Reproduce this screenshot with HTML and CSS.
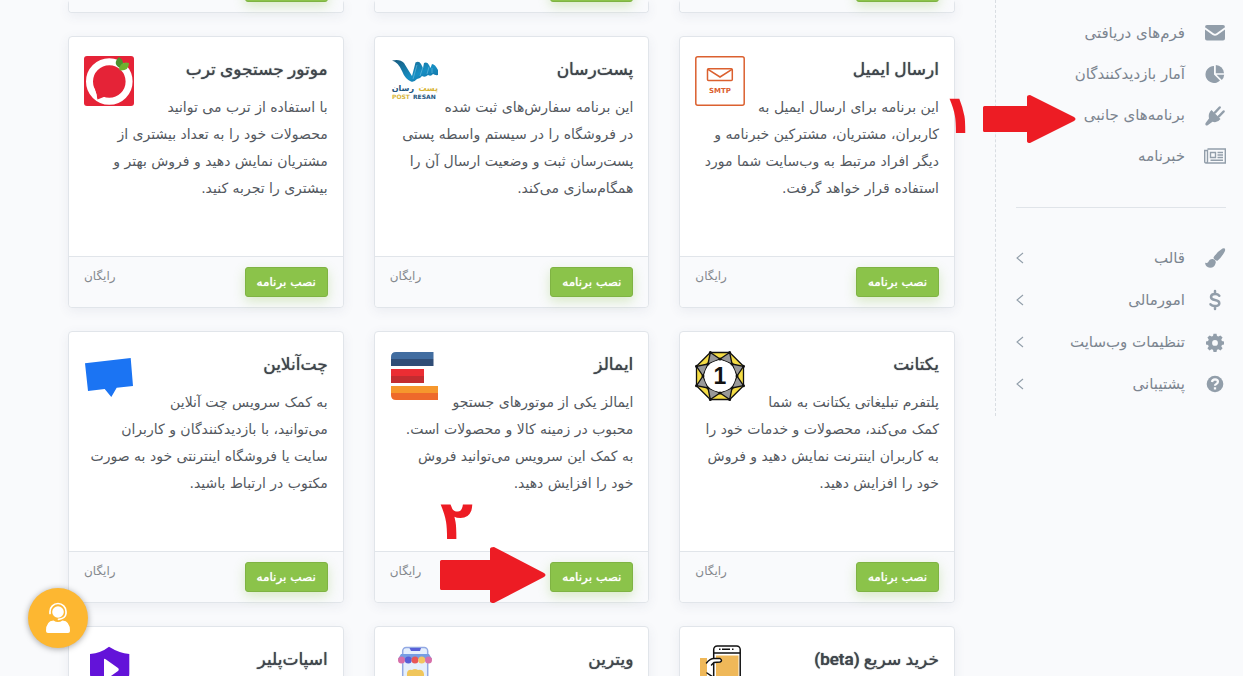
FILE: index.html
```html
<!DOCTYPE html>
<html lang="fa" dir="rtl">

<head>
    <meta charset="UTF-8">
    <meta name="viewport" content="width=device-width, initial-scale=1.0">
    <title>برنامه‌های جانبی</title>
    <link rel="stylesheet" href="styles.css">
</head>

<body>
    <div class="page">
        <aside class="sidebar">
            <nav>
                <ul class="menu">
                    <li><a href="#">
                        <svg class="menu-icon" viewBox="0 0 22 22"><path d="M1 5.200Q1 3 3 3H19Q21 3 21 5.200L12.500 11.200Q11 12.200 9.500 11.200L1 5.200Z"/><path d="M1 7.500L8.600 13Q11 14.600 13.400 13L21 7.500V16.500Q21 18.500 19 18.500H3Q1 18.500 1 16.500Z"/></svg>
                        <span>فرم‌های دریافتی</span>
                    </a></li>
                    <li><a href="#">
                        <svg class="menu-icon" viewBox="0 0 22 22"><path d="M10 11.500L16 17.500A8.500 8.500 0 1 1 10 3Z"/><path d="M11.800 2A8.300 8.300 0 0 1 20 10.200H11.800Z"/><path d="M12.600 11.800H20.200Q20 14.800 17.800 17Z"/></svg>
                        <span>آمار بازدیدکنندگان</span>
                    </a></li>
                    <li><a href="#">
                        <svg class="menu-icon" viewBox="0 0 22 22"><path d="M7.500 6L16.500 15Q13.500 19.300 8.500 17.800L4 21Q2.500 22 1.600 21Q.8 20 1.800 18.800L5 14.500Q3.800 9.500 7.500 6Z"/><path class="line" d="M11 8.500L15.700 3.500M14.800 12.500L19.600 7.500"/></svg>
                        <span>برنامه‌های جانبی</span>
                    </a></li>
                    <li><a href="#">
                        <svg class="menu-icon thin" viewBox="0 0 22 22"><path d="M3.500 4H21.300V18H2Q.7 18 .7 16.500V5.500H3.500V16.500Q3.500 18 2 18"/><path d="M6.500 7.500H11.500V12.500H6.500ZM13.500 7.500H19M13.500 10H19M13.500 12.500H19M6.500 15.200H19"/></svg>
                        <span>خبرنامه</span>
                    </a></li>
                </ul>
                <hr class="menu-divider">
                <ul class="menu menu-parents">
                    <li><a href="#">
                        <svg class="menu-icon" viewBox="0 0 22 22"><path d="M20.800 1.500Q21.600 3 20.600 4.700Q17.500 10.500 13.500 13.800Q12.300 14 10.800 12.800Q9.300 11.500 9.600 10.300Q13.500 4.500 18.500 1.500Q20 .8 20.800 1.500Z"/><path d="M8.700 12Q11.800 12.700 11.800 15.500Q10.800 20.800 6 20.800Q1.500 20.500 1 15.500Q3 16.800 4.300 15Q5.500 11.800 8.700 12Z"/></svg>
                        <span>قالب</span>
                        <svg class="chevron" viewBox="0 0 8 12"><path d="M7 1L1 6L7 11"/></svg>
                    </a></li>
                    <li><a href="#">
                        <svg class="menu-icon" viewBox="0 0 22 22"><path class="line" d="M15.300 6.700Q14 5 11 5Q7 5 7 8Q7 10.300 11 11Q15.300 11.800 15.300 14.200Q15.300 17 11 17Q8 17 6.500 15.300M11 2V5M11 17V20"/></svg>
                        <span>امورمالی</span>
                        <svg class="chevron" viewBox="0 0 8 12"><path d="M7 1L1 6L7 11"/></svg>
                    </a></li>
                    <li><a href="#">
                        <svg class="menu-icon" viewBox="0 0 22 22"><path fill-rule="evenodd" d="M9.500 2.800H12.500L13 5L14.500 5.600L16.400 4.400L18.600 6.500L17.300 8.500L17.900 9.900L20 10.400V13.400L17.900 13.900L17.300 15.400L18.600 17.300L16.500 19.500L14.500 18.200L13 18.800L12.500 21H9.500L9 18.800L7.500 18.200L5.500 19.500L3.400 17.300L4.700 15.400L4.100 13.900L2 13.400V10.400L4.100 9.900L4.700 8.500L3.400 6.500L5.600 4.400L7.500 5.600L9 5ZM11 9A2.900 2.900 0 1 0 11 14.800A2.900 2.900 0 1 0 11 9Z"/></svg>
                        <span>تنظیمات وب‌سایت</span>
                        <svg class="chevron" viewBox="0 0 8 12"><path d="M7 1L1 6L7 11"/></svg>
                    </a></li>
                    <li><a href="#">
                        <svg class="menu-icon" viewBox="0 0 22 22"><circle cx="11" cy="11" r="8.300"/><path class="cut" d="M8 9Q8.300 6.400 11 6.400Q13.900 6.500 13.900 8.800Q13.900 10.200 12.300 11Q11 11.600 11 12.800M11 14.300V16.500"/></svg>
                        <span>پشتیبانی</span>
                        <svg class="chevron" viewBox="0 0 8 12"><path d="M7 1L1 6L7 11"/></svg>
                    </a></li>
                </ul>
            </nav>
        </aside>

        <main class="content">
            <div class="apps">
                <article class="card card-end"><div class="card-footer"><button type="button" class="btn" aria-label="نصب برنامه"></button></div></article>
                <article class="card card-end"><div class="card-footer"><button type="button" class="btn" aria-label="نصب برنامه"></button></div></article>
                <article class="card card-end"><div class="card-footer"><button type="button" class="btn" aria-label="نصب برنامه"></button></div></article>

                <article class="card">
                    <div class="card-body">
                        <svg class="logo" viewBox="0 0 50 50" fill="none" stroke="#db602f" stroke-width="1.500"><rect x=".8" y=".8" width="48.400" height="48.400" rx="2"/><rect x="12.500" y="12.800" width="24.800" height="11.800" rx="1"/><path d="M13 13.300L25 21L37 13.300"/><text class="smtp" x="25" y="37" text-anchor="middle">SMTP</text></svg>
                        <h3>ارسال ایمیل</h3>
                        <p>این برنامه برای ارسال ایمیل به<br>کاربران، مشتریان، مشترکین خبرنامه و<br>دیگر افراد مرتبط به وب‌سایت شما مورد<br>استفاده قرار خواهد گرفت.</p>
                    </div>
                    <div class="card-footer"><button type="button" class="btn">نصب برنامه</button><span class="price">رایگان</span></div>
                </article>

                <article class="card">
                    <div class="card-body">
                        <svg class="logo" viewBox="0 0 50 50">
                            <defs><linearGradient id="ribbon" x2="1" y2="1"><stop offset="0" stop-color="#175a7e"/><stop offset=".6" stop-color="#168fc4"/><stop offset="1" stop-color="#176b9c"/></linearGradient></defs>
                            <path fill="url(#ribbon)" d="M2 4.500Q10 2.500 14 7Q17 12 22 20L25.500 6.500Q29 4.500 31 8L33 12L34 7Q37 5.500 39 9L40.500 12L42 8Q45 8 48 14V19Q45 19.500 43 18Q41 21 38 19Q35 22 32 20Q30 23 27 23Q24 26.500 21 25.500Q15 23 12 15Q8 6 2 4.500Z"/>
                            <path fill="none" stroke="#72bfdf" stroke-width=".6" d="M23 23L27 9M30 20L33 11M37 18L39 11M42 17V12"/>
                            <text class="post-fa post-gold" x="48" y="35">پست</text><text class="post-fa post-blue" x="24" y="35">رسان</text>
                            <text class="post-en post-gold" x="2" y="43">POST</text><text class="post-en post-blue" x="23" y="43">RESAN</text>
                        </svg>
                        <h3>پست‌رسان</h3>
                        <p>این برنامه سفارش‌های ثبت شده<br>در فروشگاه را در سیستم واسطه پستی<br>پست‌رسان ثبت و وضعیت ارسال آن را<br>همگام‌سازی می‌کند.</p>
                    </div>
                    <div class="card-footer"><button type="button" class="btn">نصب برنامه</button><span class="price">رایگان</span></div>
                </article>

                <article class="card">
                    <div class="card-body">
                        <svg class="logo" viewBox="0 0 50 50"><rect width="50" height="50" rx="3" fill="#e52337"/><circle cx="25.300" cy="25.500" r="19.800" fill="none" stroke="#fff" stroke-width="7"/><path d="M11 33L13.500 43.500L21 40.500Z" fill="#e52337"/><path d="M8.500 36L13 43L12.500 38L10 32Z" fill="#fff"/><path d="M36 12Q28 8 35 1Q42 6 37 13Z" fill="#4a922e"/><path d="M35 13Q37 5 45 7Q45 15 36 14.500Z" fill="#6fb22f"/></svg>
                        <h3>موتور جستجوی ترب</h3>
                        <p>با استفاده از ترب می توانید<br>محصولات خود را به تعداد بیشتری از<br>مشتریان نمایش دهید و فروش بهتر و<br>بیشتری را تجربه کنید.</p>
                    </div>
                    <div class="card-footer"><button type="button" class="btn">نصب برنامه</button><span class="price">رایگان</span></div>
                </article>

                <article class="card">
                    <div class="card-body">
                        <svg class="logo" viewBox="0 0 50 50" stroke="#111" stroke-width="1.300" stroke-linejoin="round">
                            <path fill="#f4dc45" d="M15.300 1.500H34.700L48.500 15.300V34.700L34.700 48.500H15.300L1.500 34.700V15.300Z"/>
                            <path fill="#999" d="M15.300 1.500L25 8L34.700 1.500L37 13L48.500 15.300L42 25L48.500 34.700L37 37L34.700 48.500L25 42L15.300 48.500L13 37L1.500 34.700L8 25L1.500 15.300L13 13Z"/>
                            <path fill="#fff" d="M25 8L37 13L42 25L37 37L25 42L13 37L8 25L13 13Z"/>
                            <circle cx="25" cy="25" r="15.500" fill="#fff" stroke="none"/>
                            <path fill="none" stroke-width="3" stroke-linecap="round" d="M15.300 1.500h0M34.700 1.500h0M48.500 15.300h0M48.500 34.700h0M34.700 48.500h0M15.300 48.500h0M1.500 34.700h0M1.500 15.300h0M25 8h0M37 13h0M42 25h0M37 37h0M25 42h0M13 37h0M8 25h0M13 13h0"/>
                            <text class="one" x="25" y="33" text-anchor="middle">1</text>
                        </svg>
                        <h3>یکتانت</h3>
                        <p>پلتفرم تبلیغاتی یکتانت به شما<br>کمک می‌کند، محصولات و خدمات خود را<br>به کاربران اینترنت نمایش دهید و فروش<br>خود را افزایش دهید.</p>
                    </div>
                    <div class="card-footer"><button type="button" class="btn">نصب برنامه</button><span class="price">رایگان</span></div>
                </article>

                <article class="card">
                    <div class="card-body">
                        <svg class="logo" viewBox="0 0 50 50"><path fill="#426da0" d="M6 1H43.500V8H1V6Q1 1 6 1Z"/><path fill="#304d76" d="M1 8H43.500V15H1Z"/><path fill="#eb2d33" d="M1 18H34V25H1Z"/><path fill="#c32c30" d="M1 25H34V32H1Z"/><path fill="#f6972d" d="M1 35H48V42H1Z"/><path fill="#ee692b" d="M1 42H48V49H6Q1 49 1 44Z"/></svg>
                        <h3>ایمالز</h3>
                        <p>ایمالز یکی از موتورهای جستجو<br>محبوب در زمینه کالا و محصولات است.<br>به کمک این سرویس می‌توانید فروش<br>خود را افزایش دهید.</p>
                    </div>
                    <div class="card-footer"><button type="button" class="btn">نصب برنامه</button><span class="price">رایگان</span></div>
                </article>

                <article class="card">
                    <div class="card-body">
                        <svg class="logo" viewBox="0 0 50 50"><path fill="#1b74f3" d="M1 12.300L46.700 7L49 35L32.700 36.700L27.300 46L20.700 38L4 40Z"/></svg>
                        <h3>چت‌آنلاین</h3>
                        <p>به کمک سرویس چت آنلاین<br>می‌توانید، با بازدیدکنندگان و کاربران<br>سایت یا فروشگاه اینترنتی خود به صورت<br>مکتوب در ارتباط باشید.</p>
                    </div>
                    <div class="card-footer"><button type="button" class="btn">نصب برنامه</button><span class="price">رایگان</span></div>
                </article>

                <article class="card">
                    <div class="card-body">
                        <svg class="logo" viewBox="0 0 50 50"><path fill="#efb859" d="M5 12H12V50H5Z"/><rect x="18.700" y="0" width="26.500" height="60" rx="3.500" fill="#fff" stroke="#111" stroke-width="1.500"/><path fill="none" stroke="#111" stroke-width="1.500" d="M18.700 7H45.200M27 3.300H35M24 3.300H25.500M37 3.300H38.500"/><path fill="#efb859" d="M21 9.500H43.500V50H21Z"/><path fill="#fff" stroke="#111" stroke-width="1.500" stroke-linecap="round" d="M11.500 17Q15 12.500 19 12.500H25Q28 14.500 25 16L19 16.500L16.500 19"/><path fill="none" stroke="#111" stroke-width="1.500" stroke-linecap="round" d="M12 27L18 31"/></svg>
                        <h3>خرید سریع (beta)</h3>
                    </div>
                </article>

                <article class="card">
                    <div class="card-body">
                        <svg class="logo" viewBox="0 0 50 50"><rect x="12.700" y="1.500" width="25" height="60" rx="3.500" fill="#e5effc" stroke="#92a9e3" stroke-width="1.500"/><path fill="#5860d8" d="M19.500 2H31L30 5H21Z"/><path fill="#769de3" d="M11 8H39L42 13H8Z"/><circle cx="11.500" cy="14" r="3.500" fill="#d76fa9"/><circle cx="18.300" cy="14" r="3.500" fill="#5860d8"/><circle cx="25" cy="14" r="3.500" fill="#e95656"/><circle cx="31.700" cy="14" r="3.500" fill="#f3c55f"/><circle cx="38.500" cy="14" r="3.500" fill="#d76fa9"/><path fill="#f0c65c" d="M17 27Q18 23 22 24Q25 22 28 24Q33 23 34 28V36H17Z"/></svg>
                        <h3>ویترین</h3>
                    </div>
                </article>

                <article class="card">
                    <div class="card-body">
                        <svg class="logo" viewBox="0 0 50 50"><path fill="#6313d9" d="M25 .7Q35 7 45.300 8V28Q44 43 25 50Q7 43 6 28V8Q17 7 25 .7Z"/><path fill="#fff" d="M20 13.500Q20 12 22 13.500L34 22Q35.500 23.500 34 25L22 33.500Q20 35 20 33Z"/></svg>
                        <h3>اسپات‌پلیر</h3>
                    </div>
                </article>
            </div>
        </main>

        <!-- step markers over the page -->
        <div class="step step-one">
            <span>۱</span>
            <svg width="93" height="48" viewBox="0 0 93 48"><path d="M1.500 11H44V2Q44 0 47 0L91 22Q94 24 91 26L47 48Q44 48 44 46V37H1.500Q0 37 0 35.500V12.500Q0 11 1.500 11Z"/></svg>
        </div>
        <div class="step step-two">
            <span>۲</span>
            <svg width="106" height="56" viewBox="0 0 106 56"><path d="M1.500 13H50V2Q50 0 54 0L104 26Q107 28 104 30L54 56Q50 56 50 54V43H1.500Q0 43 0 41.500V14.500Q0 13 1.500 13Z"/></svg>
        </div>

        <button type="button" class="support" aria-label="پشتیبانی">
            <svg width="28" height="32" viewBox="0 0 28 32"><circle cx="14" cy="10" r="5.800" fill="#fff"/><path fill="none" stroke="#fff" stroke-width="1.700" stroke-linecap="round" d="M6 11.500V9.500A8 8 0 0 1 22 9.500V11.500Q21.500 16.500 14.500 17.300"/><path fill="#fff" d="M2 29Q2 19 9.500 18.500Q14 21.500 18.500 18.500Q26 19 26 29Q26 31 24 31H4Q2 31 2 29Z"/></svg>
        </button>
    </div>
</body>

</html>
```
FILE: styles.css
```css
* {
    box-sizing: border-box;
}

body {
    margin: 0;
    font-family: "DejaVu Sans", sans-serif;
    font-size: 14px;
    color: #54595f;
    background-color: #f9fafc;
}

.page {
    position: relative;
    display: flex;
    align-items: flex-start;
    height: 100vh;
    overflow: hidden;
}

/* sidebar */
.sidebar {
    width: 248px;
    flex-shrink: 0;
    padding: 12px 17px 11px 20px;
    border-left: 1px dashed #d9dde2;
}

.menu {
    list-style: none;
    margin: 0;
    padding: 0;
}

.menu a {
    display: flex;
    align-items: center;
    gap: 19px;
    height: 41px;
    font-size: 15px;
    color: #7c8590;
    text-decoration: none;
    white-space: nowrap;
}

.menu-parents a {
    height: 42px;
}

.menu-icon {
    width: 22px;
    height: 22px;
    fill: #929eaa;
}

.menu-icon .line {
    fill: none;
    stroke: #929eaa;
    stroke-width: 2.5;
    stroke-linecap: round;
}

.menu-icon .cut {
    fill: none;
    stroke: #f9fafc;
    stroke-width: 2.3;
}

.menu-icon.thin {
    fill: none;
    stroke: #929eaa;
    stroke-width: 1.4;
}

.chevron {
    width: 8px;
    height: 12px;
    margin-right: auto;
    fill: none;
    stroke: #929eaa;
    stroke-width: 1.1;
}

.menu-divider {
    margin: 31px 0 29px;
    border: none;
    border-top: 1px solid #e0e4e9;
}

/* app cards */
.content {
    flex: 1;
    min-width: 0;
    padding: 0 40px 0 68px;
}

.apps {
    display: grid;
    grid-template-columns: repeat(3, 1fr);
    gap: 23px 30px;
}

.card {
    display: flex;
    flex-direction: column;
    min-height: 272px;
    background-color: #fff;
    border: 1px solid #e1e5ea;
    border-radius: 4px;
    box-shadow: 0 3px 12px rgba(60, 80, 110, 0.08);
}

.card-end {
    min-height: 0;
    height: 13px;
    justify-content: flex-end;
    border-top: none;
}

.card-body {
    flex: 1;
    padding: 19px 15px 0;
}

.logo {
    float: left;
    width: 50px;
    height: 50px;
    overflow: visible;
}

.card h3 {
    margin: 0 0 11px;
    font-family: Roboto, "DejaVu Sans", sans-serif;
    font-size: 17px;
    font-weight: 500;
    line-height: 27px;
    color: #3f454c;
    text-shadow: 0 0 1px #3f454c;
}

.card p {
    margin: 0;
    line-height: 27px;
    white-space: nowrap;
}

.card-footer {
    display: flex;
    justify-content: space-between;
    align-items: flex-start;
    padding: 10px 15px;
    border-top: 1px solid #e1e5ea;
    border-radius: 0 0 4px 4px;
    background-color: #f9fafc;
}

.btn {
    width: 83px;
    height: 30px;
    padding: 0;
    font-family: inherit;
    font-size: 12px;
    color: #fff;
    text-shadow: 0 0 1px #fff;
    background-color: #8bc34a;
    border: 1px solid #7fb343;
    border-radius: 3px;
    box-shadow: 0 4px 12px rgba(139, 195, 74, 0.3);
    cursor: pointer;
}

.price {
    font-size: 12px;
    line-height: 18px;
    color: #85898e;
}

/* texts inside the logos */
.smtp {
    font: bold 7px "DejaVu Sans", sans-serif;
    fill: #db602f;
    stroke: none;
}

.one {
    font: bold 23px "Liberation Sans", sans-serif;
    fill: #111;
    stroke: none;
}

.post-fa {
    font: bold 8px "DejaVu Sans", sans-serif;
}

.post-en {
    font: bold 6px "DejaVu Sans", sans-serif;
    direction: ltr;
}

.post-gold {
    fill: #d8b63a;
}

.post-blue {
    fill: #24567f;
}

/* step markers */
.step {
    position: absolute;
    display: flex;
    color: #ed1c24;
    fill: #ed1c24;
    font: bold 54px/48px "DejaVu Sans", sans-serif;
    direction: ltr;
    pointer-events: none;
}

.step-one {
    top: 95px;
    right: 167px;
    align-items: center;
    gap: 8px;
}

.step-one span {
    line-height: 40px;
    height: 48px;
}

.step-two {
    top: 497px;
    left: 440px;
    flex-direction: column;
}

.step-two span {
    height: 50px;
}

.support {
    position: absolute;
    left: 28px;
    bottom: 28px;
    display: flex;
    align-items: center;
    justify-content: center;
    width: 60px;
    height: 60px;
    padding: 0;
    background-color: #fdb731;
    border: none;
    border-radius: 50%;
    box-shadow: 0 1px 6px rgba(0, 0, 0, 0.35);
    cursor: pointer;
}
```
